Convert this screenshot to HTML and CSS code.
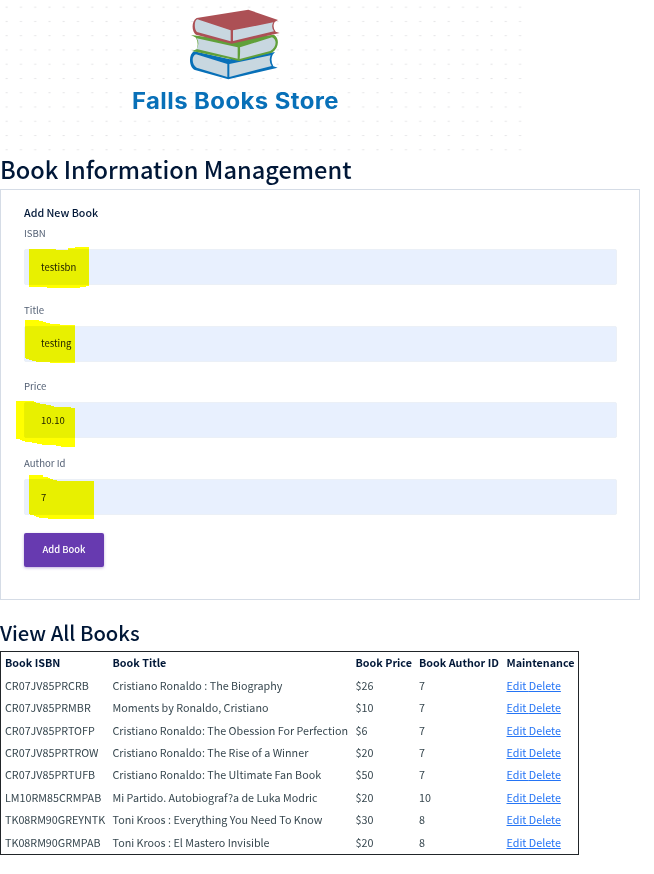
FILE: index.html
```html
<!DOCTYPE html>
<html lang="en">
<head>
<meta charset="utf-8">
<title>Falls Books Store</title>
<link rel="stylesheet" href="styles.css">
</head>
<body>
<header class="banner">
<svg class="logo" width="523" height="153" viewBox="0 0 523 153" role="img" aria-label="Falls Books Store">
<defs><pattern id="dots" x="-.5" y="0" width="14.26" height="14.26" patternUnits="userSpaceOnUse"><rect x="6.2" y="6.7" width="2" height="1" fill="#e2e2e4"/></pattern></defs>
<rect width="523" height="153" fill="url(#dots)"/>
<g transform="translate(180 0) scale(.33333)">
<path d="M42 154L150 178L285 156L278 164Q270 180 280 199L293 203L145 238L45 210C26 202 25 163 42 154Z" fill="#0870b8"/>
<path d="M48 163L142 192V231L50 203C36 196 33 168 48 163ZM148 192L272 166Q265 182 275 198L148 231Z" fill="#c8d7e0"/>
<path d="M34 105L150 120L282 104C299 114 298 144 276 158L178 183L36 153L50 148Q57 130 48 113Z" fill="#60a03a"/>
<path d="M50 115L173 142V176L50 147Q60 130 50 115ZM180 142L276 112C292 118 290 142 271 153L179 177Q181 160 180 142Z" fill="#c8d7e0"/>
<path d="M50 54L205 29L294 60L284 66Q276 80 287 95L299 99L155 131L48 104C34 95 34 62 50 54Z" fill="#ac5055"/>
<path d="M52 58L152 91V124L51 96C42 88 42 61 52 58ZM159 91L280 67Q272 80 282 94L159 123Z" fill="#c8d7e0"/>
</g>
<text class="brand" x="132" y="108.500" textLength="207" lengthAdjust="spacingAndGlyphs">Falls Books Store</text>
</svg>
</header>
<main>
<h1 class="page-title">Book Information Management</h1>
<form class="card">
<h2 class="form-title">Add New Book</h2>
<div class="field"><label class="label" for="isbn">ISBN</label><div class="control"><input class="input" id="isbn" value="testisbn"><svg class="mark" width="110" height="60"><path d="M13 15H40V16H52V14H59V13H73V52H70V53H64V54H31V53H13Z"/></svg></div></div>
<div class="field"><label class="label" for="title">Title</label><div class="control"><input class="input" id="title" value="testing"><svg class="mark" width="110" height="60"><path d="M9 9H23V10H27V11H30V12H34V13H44V14H59V52H34V51H20V50H16V49H13V48H10V47H9Z"/></svg></div></div>
<div class="field"><label class="label" for="price">Price</label><div class="control"><input class="input" id="price" value="10.10"><svg class="mark" width="110" height="60"><path d="M0 14H18V15H20V16H24V17H30V18H35V19H38V20H55V21H59V60H45V59H40V58H26V57H21V56H16V55H9V54H6V53H4V52H0Z"/></svg></div></div>
<div class="field"><label class="label" for="author">Author Id</label><div class="control"><input class="input" id="author" value="7"><svg class="mark" width="110" height="60"><path d="M13 11H27V13H32V14H34V15H37V16H41V17H78V55H32V54H23V53H20V52H18V51H14V50H13Z"/></svg></div></div>
<button class="button" type="button">Add Book</button>
</form>
<h2 class="list-title">View All Books</h2>
<table class="books">
<colgroup><col class="c-isbn"><col class="c-title"><col class="c-price"><col class="c-author"><col class="c-actions"></colgroup>
<thead><tr><th>Book ISBN</th><th>Book Title</th><th>Book Price</th><th>Book Author ID</th><th>Maintenance</th></tr></thead>
<tbody>
<tr><td>CR07JV85PRCRB</td><td>Cristiano Ronaldo : The Biography</td><td>$26</td><td>7</td><td><a href="#">Edit </a><a href="#">Delete</a></td></tr>
<tr><td>CR07JV85PRMBR</td><td>Moments by Ronaldo, Cristiano</td><td>$10</td><td>7</td><td><a href="#">Edit </a><a href="#">Delete</a></td></tr>
<tr><td>CR07JV85PRTOFP</td><td>Cristiano Ronaldo: The Obession For Perfection</td><td>$6</td><td>7</td><td><a href="#">Edit </a><a href="#">Delete</a></td></tr>
<tr><td>CR07JV85PRTROW</td><td>Cristiano Ronaldo: The Rise of a Winner</td><td>$20</td><td>7</td><td><a href="#">Edit </a><a href="#">Delete</a></td></tr>
<tr><td>CR07JV85PRTUFB</td><td>Cristiano Ronaldo: The Ultimate Fan Book</td><td>$50</td><td>7</td><td><a href="#">Edit </a><a href="#">Delete</a></td></tr>
<tr><td>LM10RM85CRMPAB</td><td>Mi Partido. Autobiograf?a de Luka Modric</td><td>$20</td><td>10</td><td><a href="#">Edit </a><a href="#">Delete</a></td></tr>
<tr><td>TK08RM90GREYNTK</td><td>Toni Kroos : Everything You Need To Know</td><td>$30</td><td>8</td><td><a href="#">Edit </a><a href="#">Delete</a></td></tr>
<tr><td>TK08RM90GRMPAB</td><td>Toni Kroos : El Mastero Invisible</td><td>$20</td><td>8</td><td><a href="#">Edit </a><a href="#">Delete</a></td></tr>
</tbody>
</table>
</main>
</body>
</html>
```
FILE: styles.css
```css
* { box-sizing: border-box; }
body { margin: 0; background: #fff; color: #37474f; font: 10.750px/22.5px "Noto Sans CJK SC", "Noto Sans", sans-serif; }
h1, h2 { margin: 0; color: #001737; font-weight: 500; }
.banner { height: 153px; }
.logo { display: block; }
.brand { font: 700 22.5px Inter, "Open Sans", sans-serif; letter-spacing: .4px; fill: #0870b8; }
.page-title { height: 36px; font-size: 23.6px; line-height: 32px; }
.card { width: 640px; height: 411px; padding: 14px 23px 0; border: 1px solid #d5dce6; }
.form-title { font-size: 10.700px; line-height: 18px; height: 20px; }
.field { height: 76.7px; }
.label { display: block; height: 25px; font-size: 9.600px; line-height: 18.4px; color: #525f73; }
.control { position: relative; height: 36px; }
.input { display: block; width: 593px; height: 36px; padding: 0 16px 1px; border: 1px solid #ebf0f7; border-radius: 2px; background: #e8f0fe; color: #222; font: inherit; font-size: 9.500px; }
.mark { position: absolute; left: -8px; top: -15px; mix-blend-mode: multiply; pointer-events: none; fill: #ff0; }
.button { display: block; width: 80px; height: 34px; margin-top: 2px; padding: 0 0 2px; border: 0; border-radius: 2px; background: #673ab0; box-shadow: 0 1px 3px #673ab066; color: #fff; font: inherit; font-size: 9.400px; font-weight: 500; }
.list-title { margin-top: 16px; height: 35px; font-size: 20.250px; line-height: 34px; }
.books { width: 579px; height: 204px; border: 1px solid #212529; border-collapse: separate; border-spacing: 0; table-layout: fixed; white-space: nowrap; }
.books th, .books td { height: 22.44px; padding: 0 0 0 4px; text-align: left; line-height: 20px; }
.books th { color: #001737; font-weight: 700; }
.books a { color: #2474f5; text-decoration: underline; }
.c-isbn { width: 107.500px; }
.c-title { width: 243px; }
.c-price { width: 63.500px; }
.c-author { width: 87.500px; }
.c-actions { width: 75.500px; }
```
